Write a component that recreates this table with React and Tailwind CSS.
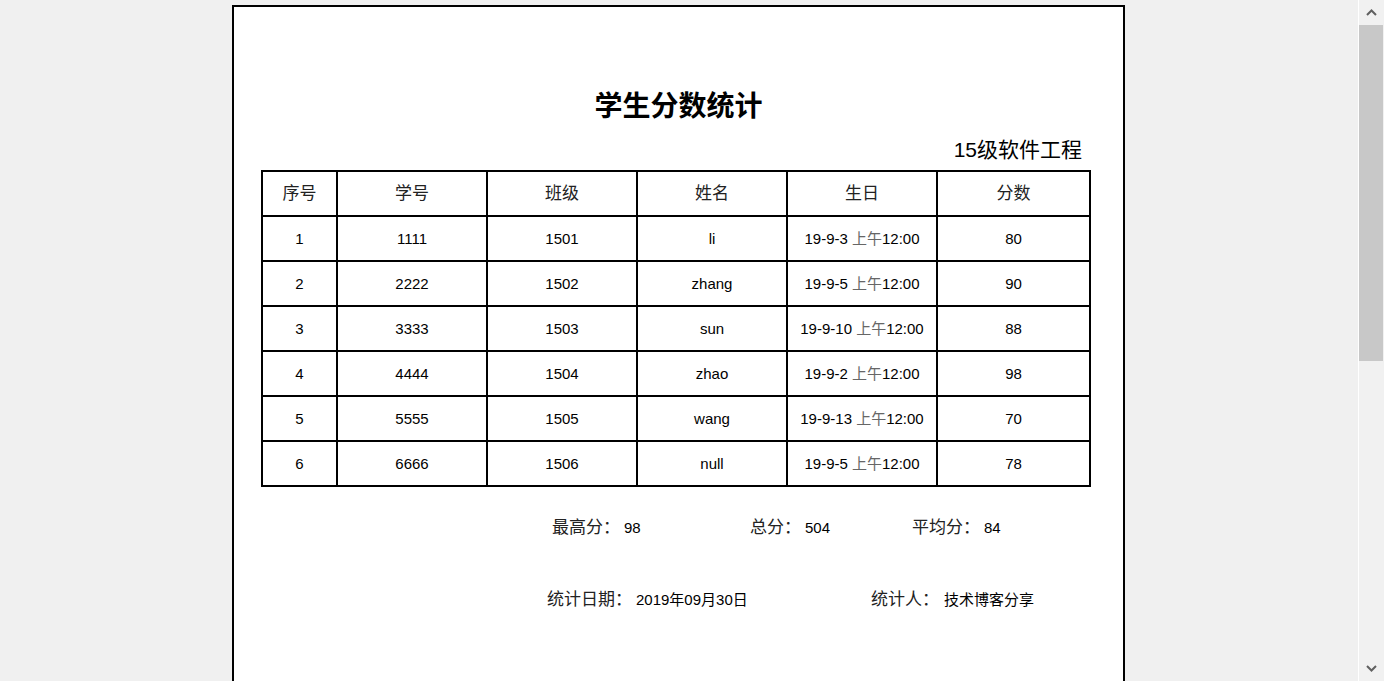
import React from "react";

const rows = [
  ["1", "1111", "1501", "li", "19-9-3", "80"],
  ["2", "2222", "1502", "zhang", "19-9-5", "90"],
  ["3", "3333", "1503", "sun", "19-9-10", "88"],
  ["4", "4444", "1504", "zhao", "19-9-2", "98"],
  ["5", "5555", "1505", "wang", "19-9-13", "70"],
  ["6", "6666", "1506", "null", "19-9-5", "78"],
];

const headers = ["序号", "学号", "班级", "姓名", "生日", "分数"];

const font = "font-['Liberation_Sans','Noto_Sans_CJK_SC',sans-serif]";

function Scrollbar() {
  return (
    <div className="w-[26px] h-screen flex flex-col bg-[#f1f1f1] border-l border-white">
      <div className="h-[25px] flex items-center justify-center">
        <svg width="11" height="7" viewBox="0 0 11 7">
          <path d="M1 6 L5.5 1.5 L10 6" fill="none" stroke="#606060" strokeWidth="2" />
        </svg>
      </div>
      <div className="h-[336px] bg-[#c8c8c8] mr-[1px]" />
      <div className="flex-1" />
      <div className="h-[26px] flex items-center justify-center">
        <svg width="11" height="7" viewBox="0 0 11 7">
          <path d="M1 1 L5.5 5.5 L10 1" fill="none" stroke="#606060" strokeWidth="2" />
        </svg>
      </div>
    </div>
  );
}

export default function App() {
  return (
    <div className={`flex h-screen overflow-hidden bg-[#f0f0f0] text-black ${font}`}>
      <div className="flex-1 flex">
        <div className="ml-[232px] mt-[5px] w-[893px] h-[1200px] bg-white border-2 border-black flex flex-col">
          <div className="mt-[79px] text-center text-[28px] leading-[36px] font-bold font-['Noto_Sans_CJK_SC',serif]">
            学生分数统计
          </div>
          <div className="mt-[14px] pr-[41px] text-right text-[21px] leading-[28px]">
            15级软件工程
          </div>
          <div className="mt-[6px] ml-[27px] w-[830px] grid grid-cols-[73px_148px_148px_148px_148px_151px] auto-rows-[43px] gap-[2px] p-[2px] bg-black">
            {headers.map((h) => (
              <div key={h} className="bg-white flex items-center justify-center text-[17px] text-[#222]">
                {h}
              </div>
            ))}
            {rows.map((r) =>
              r.map((c, i) => (
                <div key={r[0] + "-" + i} className="bg-white flex items-center justify-center text-[15px] pt-[1px]">
                  {i === 4 ? (
                    <span>
                      {c} <span className="text-[#666]">上午</span>12:00
                    </span>
                  ) : (
                    c
                  )}
                </div>
              ))
            )}
          </div>
          <div className="mt-[29px] pl-[318px] flex leading-[24px]">
            <div className="w-[198px] text-[17px] text-[#222]">
              最高分：<span className="ml-[4px] text-[15px] text-black">98</span>
            </div>
            <div className="w-[162px] text-[17px] text-[#222]">
              总分：<span className="ml-[4px] text-[15px] text-black">504</span>
            </div>
            <div className="text-[17px] text-[#222]">
              平均分：<span className="ml-[4px] text-[15px] text-black">84</span>
            </div>
          </div>
          <div className="mt-[48px] pl-[313px] flex leading-[24px]">
            <div className="w-[324px] text-[17px] text-[#222]">
              统计日期：<span className="ml-[4px] text-[15px] text-black">2019年09月30日</span>
            </div>
            <div className="text-[17px] text-[#222]">
              统计人：<span className="ml-[5px] text-[15px] text-black">技术博客分享</span>
            </div>
          </div>
        </div>
      </div>
      <Scrollbar />
    </div>
  );
}
